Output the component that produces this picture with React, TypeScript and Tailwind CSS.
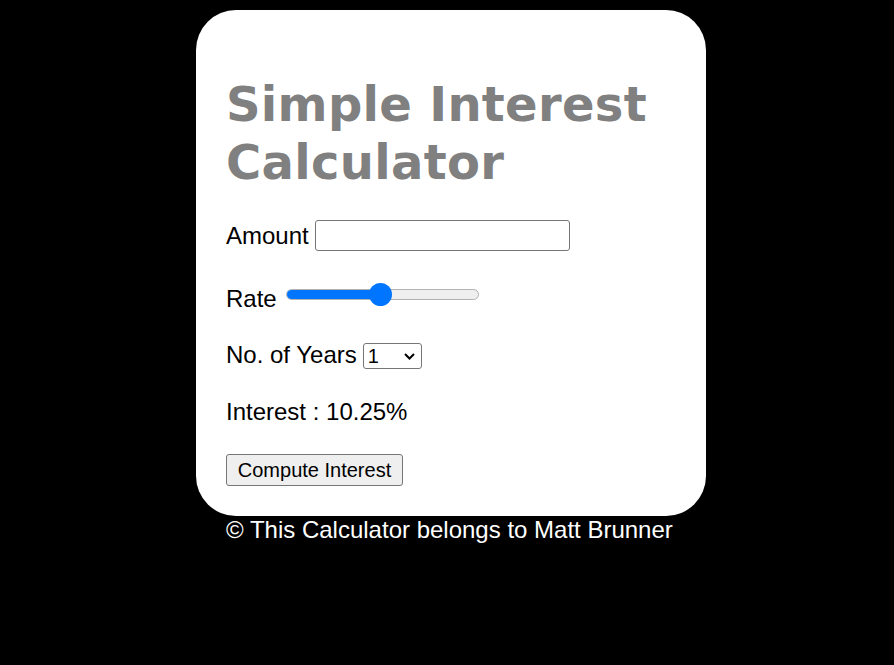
import React from "react";

export default function App() {
  return (
    <div className="min-h-[665px] w-full bg-black pt-[10px] font-['Liberation_Sans',Arial,sans-serif] text-[24px] leading-[28px] text-black">
      <div className="ml-[196px] flex w-[510px] flex-col rounded-[40px] bg-white px-[30px] pb-[30px] pt-[65px]">
        <h1 className="font-['Verdana','DejaVu_Sans',sans-serif] text-[48px] font-bold leading-[58px] tracking-[0.3px] text-[#808080]">
          Simple Interest Calculator
        </h1>

        <div className="mt-[29px] flex h-[31px] items-center">
          <span>Amount</span>
          <div className="ml-[6px] h-[31px] w-[255px] rounded-[3px] border border-[#767676] bg-white" />
        </div>

        <div className="mt-[34px] flex h-[28px] items-center">
          <span>Rate</span>
          <div className="relative mb-[10px] ml-[9px] flex h-[24px] w-[193px] items-center">
            <div className="flex h-[11px] w-full overflow-hidden rounded-full border border-[#b2b2b2] bg-[#efefef]">
              <div className="h-full w-[95px] bg-[#0075ff]" />
            </div>
            <div className="absolute left-[83px] top-[0.5px] h-[23px] w-[23px] rounded-full bg-[#0075ff]" />
          </div>
        </div>

        <div className="mt-[28px] flex h-[28px] items-end">
          <span>No. of Years</span>
          <div className="relative ml-[6px] flex h-[26px] w-[59px] items-center rounded-[3px] border border-[#767676] bg-white pl-[4px] text-[20px]">
            <span className="leading-[20px]">1</span>
            <svg
              className="absolute right-[6px] top-[9px]"
              width="11"
              height="7"
              viewBox="0 0 11 7"
              fill="none"
            >
              <path d="M1 1l4.5 4.5L10 1" stroke="#000" strokeWidth="2" />
            </svg>
          </div>
        </div>

        <div className="mt-[29px]">Interest : 10.25%</div>

        <div className="mt-[28px] flex">
          <button className="h-[32px] w-[177px] rounded-[3px] border border-[#767676] bg-[#efefef] text-[20px] leading-[30px] text-black">
            Compute Interest
          </button>
        </div>
      </div>
      <div className="pl-[226px] text-white">© This Calculator belongs to Matt Brunner</div>
    </div>
  );
}
